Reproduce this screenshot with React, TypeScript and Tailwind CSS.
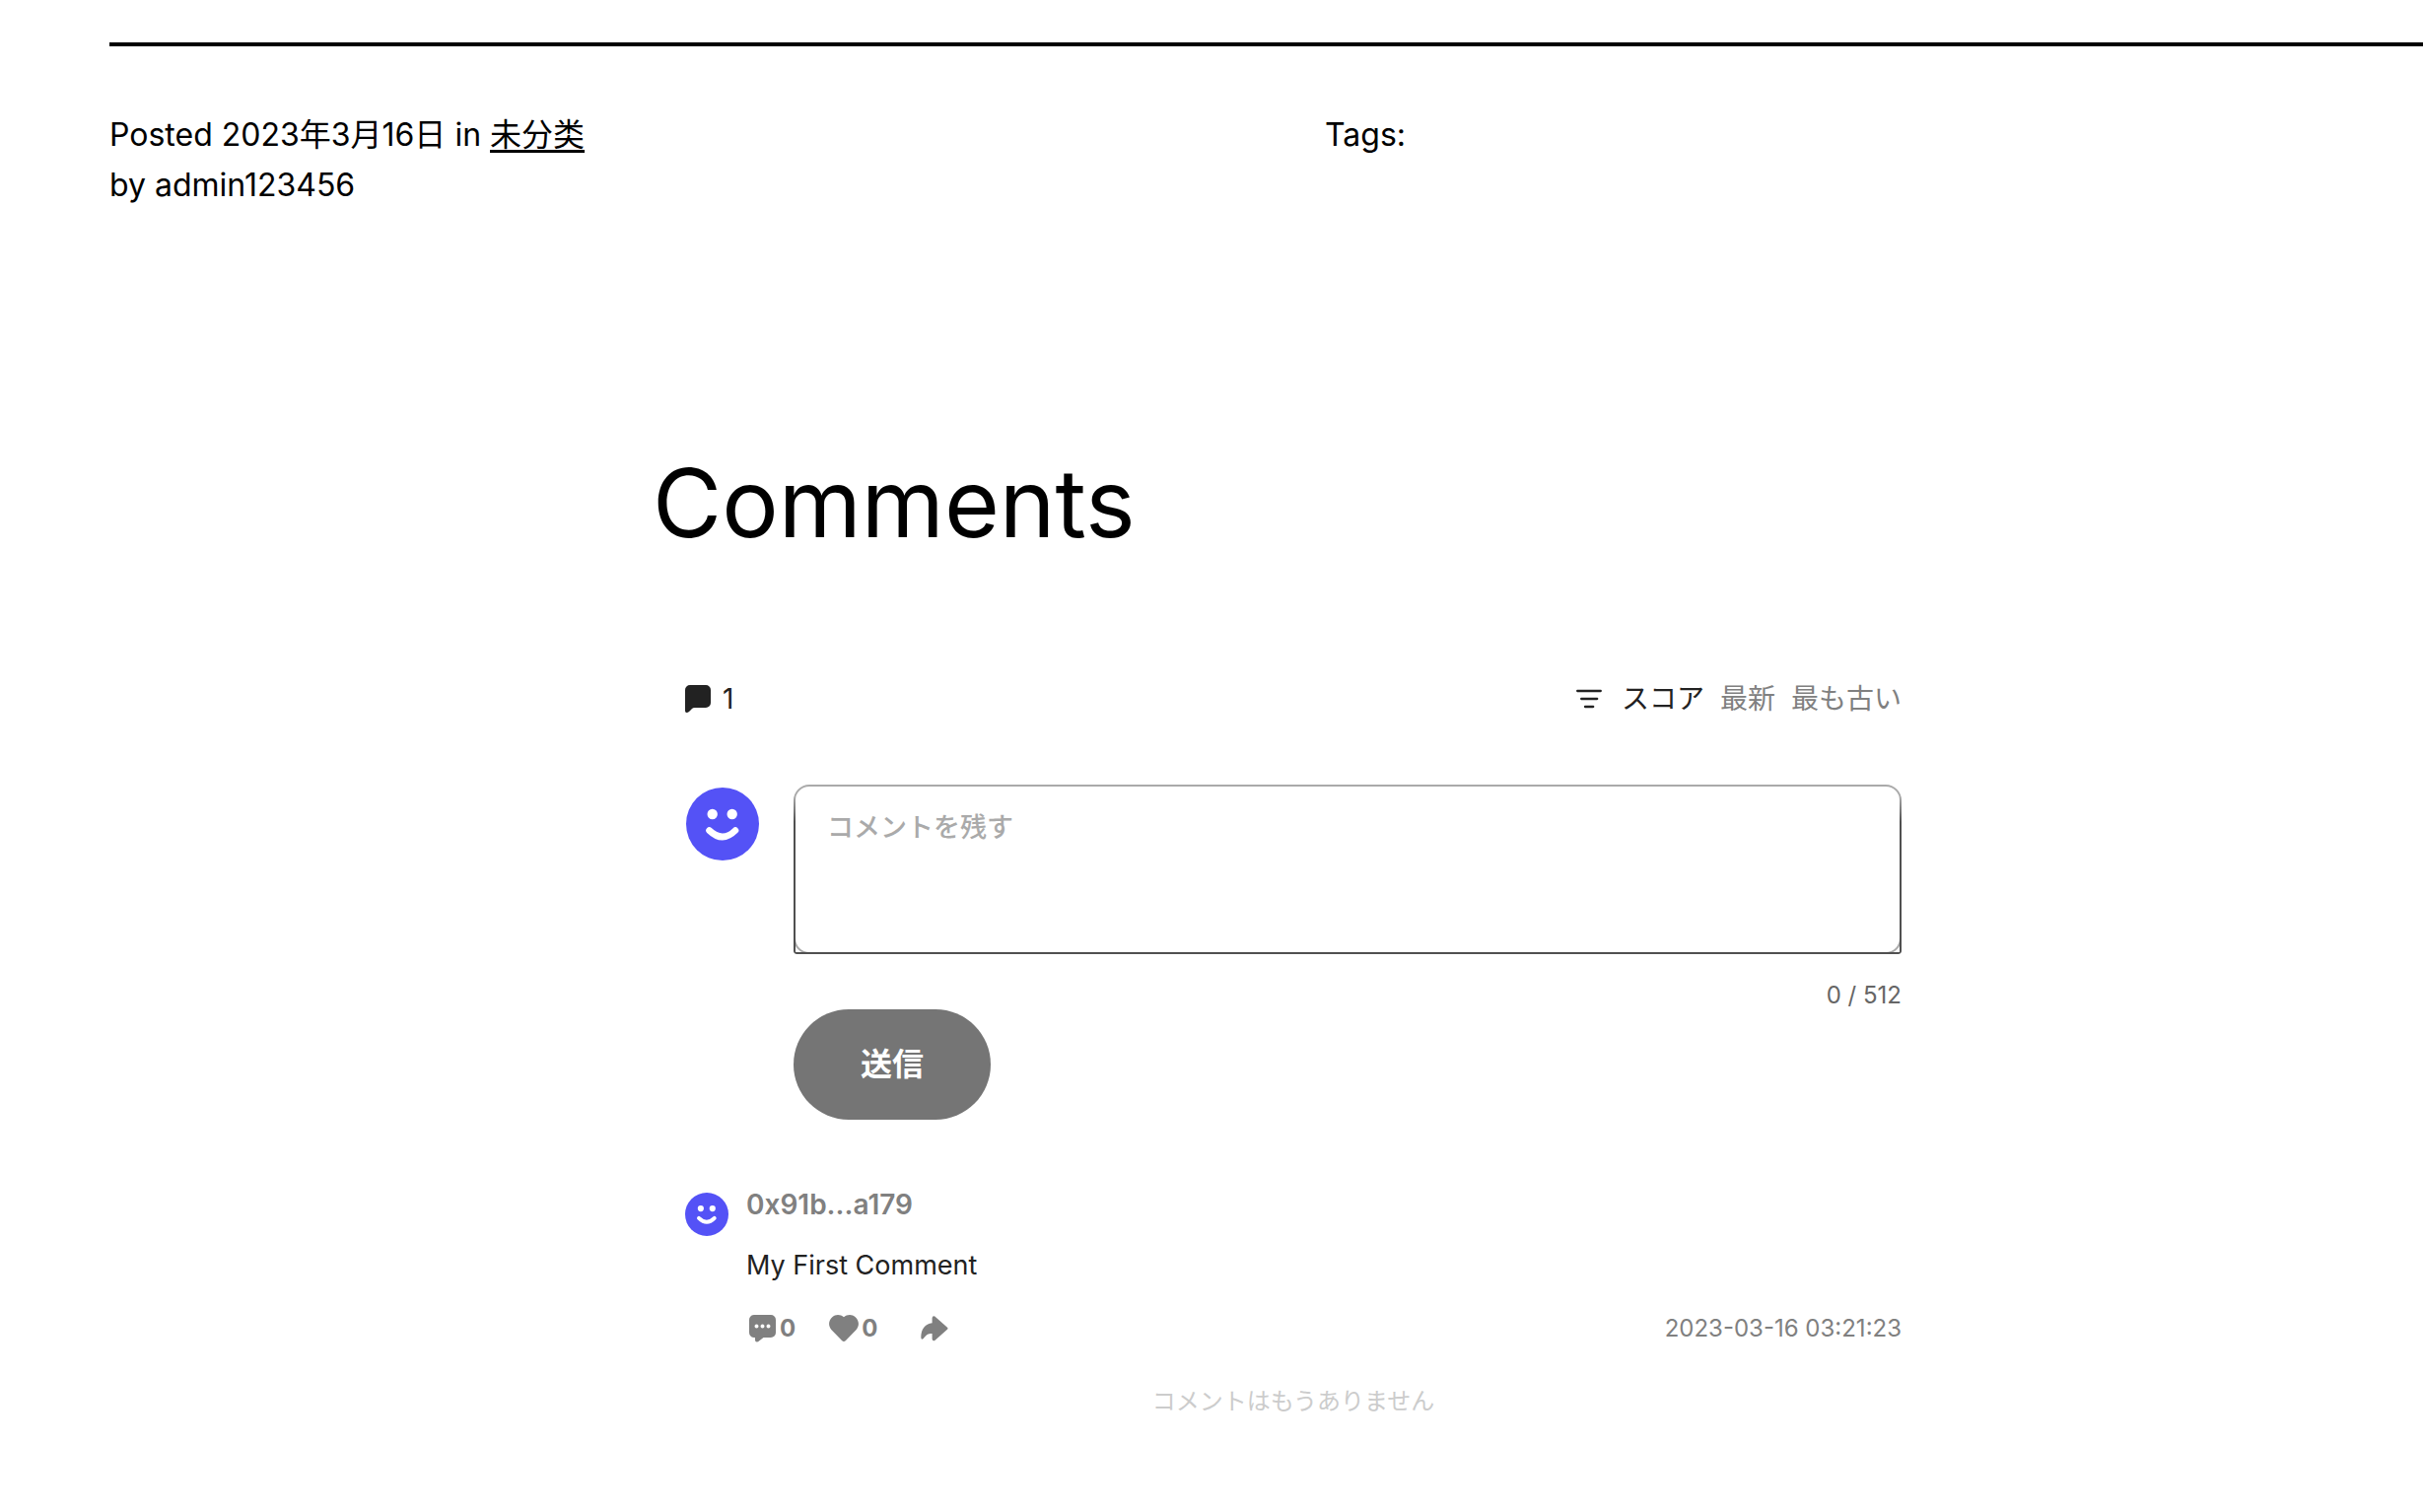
import { useState } from 'react';

function Smiley({ className }: { className: string }) {
  return (
    <svg viewBox="0 0 74 74" className={className} role="img" aria-label="avatar">
      <circle cx="37" cy="37" r="37" fill="#5452f6" />
      <circle cx="26.7" cy="27" r="5.2" fill="#fff" />
      <circle cx="46.7" cy="27" r="5.2" fill="#fff" />
      <path d="M23.5 43.5Q37 56.500 50 43.500" fill="none" stroke="#fff" strokeWidth="6.600" strokeLinecap="round" />
    </svg>
  );
}

function BubbleIcon() {
  return (
    <svg viewBox="0 0 26 28" className="h-[28px] w-[26px]" fill="#222" aria-hidden="true">
      <path d="M5 0H21a5 5 0 0 1 5 5V18a5 5 0 0 1-5 5H9.500Q8 23 7 24L4 27Q2.800 28 1.500 28Q0 28 0 26.300V5a5 5 0 0 1 5-5Z" />
    </svg>
  );
}

function FilterIcon() {
  return (
    <svg viewBox="0 0 26 20" className="mr-1 h-[20px] w-[26px]" stroke="#222" strokeWidth="2.300" strokeLinecap="round" aria-hidden="true">
      <path d="M1.200 2H24.800M5.200 10H21.200M9 18H17.200" />
    </svg>
  );
}

function ReplyIcon() {
  return (
    <svg viewBox="0 0 27 28" className="h-[28px] w-[27px]" fill="#808080" aria-hidden="true">
      <path
        fillRule="evenodd"
        d="M5 0H22a5 5 0 0 1 5 5V18a5 5 0 0 1-5 5H14.500L9 27.300Q6 28 6 25.500V23H5a5 5 0 0 1-5-5V5a5 5 0 0 1 5-5ZM7.500 9.500a2 2 0 1 0 0 4a2 2 0 1 0 0-4ZM13.500 9.500a2 2 0 1 0 0 4a2 2 0 1 0 0-4ZM19.500 9.500a2 2 0 1 0 0 4a2 2 0 1 0 0-4Z"
      />
    </svg>
  );
}

function HeartIcon() {
  return (
    <svg viewBox="0 0 30 28" className="h-[28px] w-[30px]" fill="#808080" aria-hidden="true">
      <path d="M15 2.200C18.500-.6 23.500-.6 26.700 2.200C30.600 5.600 31 11.200 27.700 15L17 26Q15 27.800 13 26L2.300 15C-1 11.200-.6 5.600 3.300 2.200C6.500-.6 11.500-.6 15 2.200Z" />
    </svg>
  );
}

function ShareIcon() {
  return (
    <svg viewBox="0 0 28 26" className="h-[26px] w-[28px]" fill="#808080" aria-hidden="true">
      <path d="M14.300.5L27 11.700Q28 12.700 27 13.700L14.300 24.900Q11.800 25.800 11.600 23.500V18C7.500 18 5.500 19.300 2.800 23Q.5 25 .3 22C.3 13 4.500 8.300 11.600 7.200V2.200Q11.800-.3 14.300.5Z" />
    </svg>
  );
}

const sorts = ['スコア', '最新', '最も古い'];

export default function App() {
  const [sort, setSort] = useState(0);
  const [text, setText] = useState('');

  return (
    <div className="min-h-screen overflow-hidden bg-white font-['Inter','Noto_Sans_CJK_JP',sans-serif] text-black">
      <div className="w-[calc(100%+166px)] pt-[43px] pl-[111px] pr-[111px]">
        <footer className="grid grid-cols-2 gap-x-16 border-t-4 border-black pt-16 text-[32px] leading-[51px]">
          <div>
            <p>
              Posted <time dateTime="2023-03-16">2023年3月16日</time> in{' '}
              <a href="#category" className="font-['Noto_Sans_CJK_SC',sans-serif] leading-none underline decoration-[3px] underline-offset-4">
                未分类
              </a>
            </p>
            <p>by admin123456</p>
          </div>
          <p>Tags:</p>
        </footer>

        <main className="mx-auto mt-[246px] max-w-[1300px]">
          <h1 className="text-[96px] leading-[102px]">Comments</h1>

          <section className="mt-32 px-[33px]">
            <header className="flex h-10 items-center justify-between text-[28px] leading-10 text-[#222]">
              <div className="flex items-center gap-3">
                <BubbleIcon />
                <span>1</span>
              </div>
              <div className="flex items-center gap-4">
                <FilterIcon />
                {sorts.map((label, i) => (
                  <button key={label} type="button" onClick={() => setSort(i)} className={i === sort ? 'text-[#222]' : 'text-[#808080]'}>
                    {label}
                  </button>
                ))}
              </div>
            </header>

            <form className="mt-[67px] flex items-start gap-[35px] pl-px" onSubmit={(e) => e.preventDefault()}>
              <Smiley className="mt-[3px] h-[74px] w-[74px] shrink-0" />
              <div className="flex-1">
                <div className="relative h-[172px]">
                  <textarea
                    aria-label="コメントを残す"
                    placeholder="コメントを残す"
                    maxLength={512}
                    value={text}
                    onChange={(e) => setText(e.target.value)}
                    className="block h-full w-full resize-none rounded-2xl border-2 border-[#aaa] bg-white px-8 py-[22px] text-[27px] leading-10 font-medium outline-none placeholder:text-[#aaa]"
                  />
                  <div className="pointer-events-none absolute inset-0 rounded-b-[3px] border-x-2 border-b-2 border-[#505050] [mask-image:linear-gradient(to_bottom,transparent_12px,black_38px)]" />
                </div>
                <p className="mt-[26px] h-[30px] text-right text-[24px] leading-8 text-[#666]">{text.length} / 512</p>
                <button type="submit" className="h-28 rounded-full bg-[#757575] px-[68px] text-[32px] leading-10 font-bold text-white">
                  送信
                </button>
              </div>
            </form>

            <article className="mt-[66px] flex items-start gap-[18px]">
              <Smiley className="mt-2 h-11 w-11 shrink-0" />
              <div className="flex-1">
                <h2 className="text-[28px] leading-10 font-semibold text-[#808080]">0x91b...a179</h2>
                <p className="mt-[22px] text-[27px] leading-10 text-[#222]">My First Comment</p>
                <div className="mt-6 flex h-10 items-center text-[24px] leading-8 text-[#808080]">
                  <button type="button" aria-label="reply" className="ml-[3px] flex items-center gap-1 font-bold">
                    <ReplyIcon />0
                  </button>
                  <button type="button" aria-label="like" className="ml-[34px] flex items-center gap-[3px] font-bold">
                    <HeartIcon />0
                  </button>
                  <button type="button" aria-label="share" className="ml-11">
                    <ShareIcon />
                  </button>
                  <time dateTime="2023-03-16T03:21:23" className="ml-auto">2023-03-16 03:21:23</time>
                </div>
              </div>
            </article>

            <p className="mt-[38px] text-center text-[24px] leading-8 text-[#ccc]">コメントはもうありません</p>
          </section>
        </main>
      </div>
    </div>
  );
}
